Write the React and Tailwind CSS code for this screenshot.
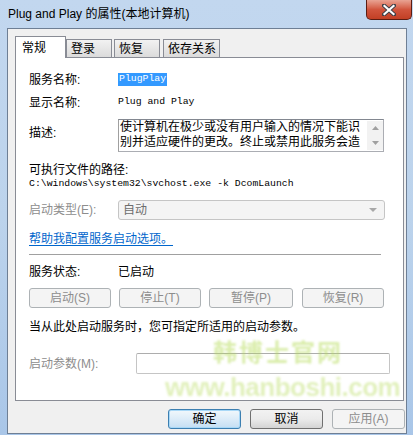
const cjk = { fontFamily: '"Liberation Sans", "Noto Sans CJK SC", sans-serif' }
const mono = { fontFamily: '"Liberation Mono", "Noto Sans CJK SC", monospace' }

const GrayButton = ({ label, w }) => (
  <div className={`h-[20px] ${w} flex items-center justify-center rounded-[3px] border border-[#adb2b5] bg-[#f4f4f4] text-[12px] text-[#8d8d8d]`}>
    {label}
  </div>
)

const Tab = ({ label, active, w, ml }) =>
  active ? (
    <div className={`relative z-10 -mb-px h-[22px] ${w} ${ml} flex items-start pl-[6px] pt-[2px] border border-b-0 border-[#898c95] bg-white text-[12px]`}>
      {label}
    </div>
  ) : (
    <div className={`h-[18px] ${w} ${ml} flex items-center pl-[4px] border border-b-0 border-[#898c95] bg-gradient-to-b from-[#f2f2f2] to-[#dbdbdb] text-[12px]`}>
      {label}
    </div>
  )

const App = () => {
  return (
    <div className="relative w-[413px] h-[435px] flex flex-col bg-gradient-to-b from-[#c2d7ef] via-[#bcd3ec] to-[#a9c6e8] overflow-hidden text-black" style={cjk}>
      {/* title bar */}
      <div className="h-[28px] flex items-start justify-between">
        <div className="pl-[8px] pt-[6px] text-[12px] leading-[16px] text-black">Plug and Play 的属性(本地计算机)</div>
        <div className="mr-[1px] w-[46px] h-[20px] flex items-center justify-center rounded-b-[5px] border border-t-0 border-[#5b1d12] bg-gradient-to-b from-[#e8a393] via-[#d1553d] to-[#c23f24]">
          <svg width="14" height="12" viewBox="0 0 14 12">
            <path d="M2 1.5 L12 10.5 M12 1.5 L2 10.5" stroke="#3b3f47" strokeWidth="4" strokeLinecap="square" />
            <path d="M2.5 2 L11.5 10 M11.5 2 L2.5 10" stroke="#ffffff" strokeWidth="2.2" strokeLinecap="square" />
          </svg>
        </div>
      </div>

      {/* client area */}
      <div className="ml-[7px] w-[400px] h-[406px] border border-[#6e7f95] bg-[#f0f0f0] flex flex-col pl-[7px] pt-[6px]">
        <div className="flex items-end h-[22px]">
          <Tab label="常规" active w="w-[51px]" ml="ml-0" />
          <Tab label="登录" w="w-[46px]" ml="ml-0" />
          <Tab label="恢复" w="w-[46px]" ml="ml-[2px]" />
          <Tab label="依存关系" w="w-[57px]" ml="ml-[3px]" />
        </div>

        {/* panel */}
        <div className="relative w-[389px] h-[344px] border border-[#898c95] bg-white pl-[13px] flex flex-col text-[12px]">
          <div className="mt-[14px] h-[15px] flex items-center">
            <span className="w-[89px]">服务名称:</span>
            <span className="h-[13px] px-[1px] flex items-center bg-[#3399ff] text-white text-[9.8px]" style={mono}>PlugPlay</span>
          </div>
          <div className="mt-[8px] h-[15px] flex items-center">
            <span className="w-[89px]">显示名称:</span>
            <span className="text-[9.8px]" style={mono}>Plug and Play</span>
          </div>
          <div className="mt-[9px] flex items-start">
            <span className="w-[89px] mt-[5px]">描述:</span>
            <div className="w-[266px] h-[33px] flex border border-[#abadb3] border-t-[#828790] border-l-[#a0a0a0] bg-white">
              <div className="flex-1 pl-[1px] leading-[15px] overflow-hidden whitespace-nowrap">
                <div>使计算机在极少或没有用户输入的情况下能识</div>
                <div>别并适应硬件的更改。终止或禁用此服务会造</div>
              </div>
              <div className="w-[16px] mt-[1px] mb-[1px] bg-[#f2f2f2] flex flex-col items-center justify-between py-[5px]">
                <svg width="7" height="4" viewBox="0 0 7 4"><path d="M0 4 L3.5 0 L7 4 Z" fill="#a0a0a0" /></svg>
                <svg width="7" height="4" viewBox="0 0 7 4"><path d="M0 0 L3.5 4 L7 0 Z" fill="#a0a0a0" /></svg>
              </div>
            </div>
          </div>
          <div className="mt-[10px] h-[15px] flex items-center">可执行文件的路径:</div>
          <div className="h-[14px] flex items-center text-[9.8px]" style={mono}>C:\windows\system32\svchost.exe -k DcomLaunch</div>
          <div className="mt-[9px] flex items-center">
            <span className="w-[89px] text-[#8d8d8d]">启动类型(E):</span>
            <div className="w-[267px] h-[20px] flex items-center justify-between rounded-[3px] border border-[#c5c5c5] bg-[#f4f4f4] pl-[4px] pr-[7px] text-[#6d6d6d]">
              <span>自动</span>
              <svg width="8" height="4" viewBox="0 0 8 4"><path d="M0 0 L8 0 L4 4 Z" fill="#a8a8a8" /></svg>
            </div>
          </div>
          <div className="mt-[11px] h-[15px] flex items-center">
            <span className="text-[#0066cc] underline underline-offset-2">帮助我配置服务启动选项。</span>
          </div>
          <div className="mt-[8px] w-[352px] h-px bg-[#a0a0a0]" />
          <div className="mt-[9px] h-[15px] flex items-center">
            <span className="w-[89px]">服务状态:</span>
            <span>已启动</span>
          </div>
          <div className="mt-[9px] flex">
            <GrayButton label="启动(S)" w="w-[82px]" />
            <div className="ml-[8px]"><GrayButton label="停止(T)" w="w-[82px]" /></div>
            <div className="ml-[8px]"><GrayButton label="暂停(P)" w="w-[84px]" /></div>
            <div className="ml-[9px]"><GrayButton label="恢复(R)" w="w-[82px]" /></div>
          </div>
          <div className="mt-[11px] h-[15px] flex items-center">当从此处启动服务时，您可指定所适用的启动参数。</div>
          <div className="mt-[19px] flex items-center">
            <span className="w-[107px] text-[#8d8d8d]">启动参数(M):</span>
            <div className="w-[254px] h-[21px] rounded-[2px] border border-[#c5c5c5] border-t-[#adadad] bg-white" />
          </div>

          {/* watermark */}
          <div className="absolute left-[197px] top-[282px] text-[24px] font-bold leading-[26px] tracking-[2px] text-[#b6dc5a] opacity-50 blur-[0.8px]">韩博士官网</div>
          <div className="absolute left-[149px] top-[315px] text-[26px] font-bold leading-[28px] tracking-[-0.5px] text-[#c4e27a] opacity-50 blur-[0.8px]" style={{ fontFamily: '"Liberation Sans", sans-serif' }}>www.hanboshi.com</div>
        </div>

        {/* bottom buttons */}
        <div className="mt-[8px] flex justify-end pr-[1px] gap-[9px] text-[12px]">
          <div className="w-[73px] h-[20px] flex items-center justify-center rounded-[3px] border border-[#3c7fb1] bg-gradient-to-b from-[#f2f8fc] via-[#dcecf8] to-[#c4def3] shadow-[inset_0_0_0_1px_#a8d8f7]">确定</div>
          <div className="w-[73px] h-[20px] flex items-center justify-center rounded-[3px] border border-[#707070] bg-gradient-to-b from-[#f2f2f2] via-[#ebebeb] to-[#d4d4d4]">取消</div>
          <GrayButton label="应用(A)" w="w-[73px]" />
        </div>
      </div>
    </div>
  )
}

export default App
